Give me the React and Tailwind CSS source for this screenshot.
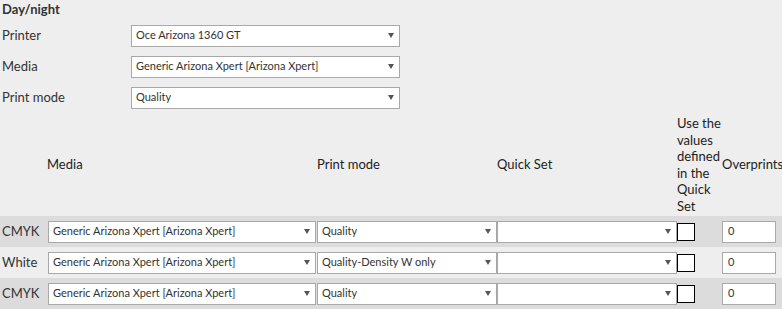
import { useState } from 'react'

const FONT = { fontFamily: 'Lato, "Open Sans", sans-serif' }

const COLS = 'grid grid-cols-[47px_269px_181px_180px_44px_61px]'

const ROWS = [
  { ink: 'CMYK', media: 'Generic Arizona Xpert [Arizona Xpert]', mode: 'Quality', dark: true },
  { ink: 'White', media: 'Generic Arizona Xpert [Arizona Xpert]', mode: 'Quality-Density W only', dark: false },
  { ink: 'CMYK', media: 'Generic Arizona Xpert [Arizona Xpert]', mode: 'Quality', dark: true },
]

function Arrow() {
  return (
    <svg width="6" height="5" viewBox="0 0 6 5" className="shrink-0">
      <path d="M0 0 L6 0 L3 5 Z" fill="#555" />
    </svg>
  )
}

function Select({ value, className = '' }) {
  return (
    <div
      className={`flex items-center justify-between h-[22px] bg-white border border-[#a9a9a9] pl-[4px] pr-[5px] text-[11px] text-[#333] ${className}`}
    >
      <span className="truncate">{value}</span>
      <Arrow />
    </div>
  )
}

function FormRow({ label, value }) {
  return (
    <div className="flex items-center h-[31px]">
      <div className="w-[131px] pl-[2px] text-[13px] text-[#333]">{label}</div>
      <Select value={value} className="w-[269px]" />
    </div>
  )
}

export default function App() {
  const [checked, setChecked] = useState([false, false, false])

  return (
    <div className="w-[782px] h-[309px] bg-[#eeeeee] overflow-hidden" style={FONT}>
      <div className="pl-[2px] h-[20px] text-[13px] font-bold text-[#333]">Day/night</div>

      <div>
        <FormRow label="Printer" value="Oce Arizona 1360 GT" />
        <FormRow label="Media" value="Generic Arizona Xpert [Arizona Xpert]" />
        <FormRow label="Print mode" value="Quality" />
      </div>

      {/* header */}
      <div className={`${COLS} items-center h-[103px] text-[13px] text-[#222]`}>
        <div />
        <div>Media</div>
        <div className="pl-[1px]">Print mode</div>
        <div>Quick Set</div>
        <div className="leading-[16.5px]">Use the values defined in the Quick Set</div>
        <div className="pl-[1px]">Overprints</div>
      </div>

      {/* rows */}
      {ROWS.map((r, i) => (
        <div
          key={i}
          className={`${COLS} items-center h-[31px] ${r.dark ? 'bg-[#dcdcdc]' : 'bg-[#eeeeee]'}`}
        >
          <div className="pl-[2px] text-[13px] text-[#333]">{r.ink}</div>
          <Select value={r.media} className="ml-[1px]" />
          <Select value={r.mode} className="ml-[1px]" />
          <Select value="" />
          <div className="flex">
            <button
              onClick={() => setChecked(c => c.map((v, j) => (j === i ? !v : v)))}
              className="w-[18px] h-[18px] bg-white border border-black text-[11px] leading-none"
            >
              {checked[i] ? '✓' : ''}
            </button>
          </div>
          <div className="pl-[1px]">
            <div className="w-[54px] h-[22px] bg-white border border-[#a9a9a9] pl-[5px] text-[11px] text-[#333] flex items-center">
              0
            </div>
          </div>
        </div>
      ))}
    </div>
  )
}
